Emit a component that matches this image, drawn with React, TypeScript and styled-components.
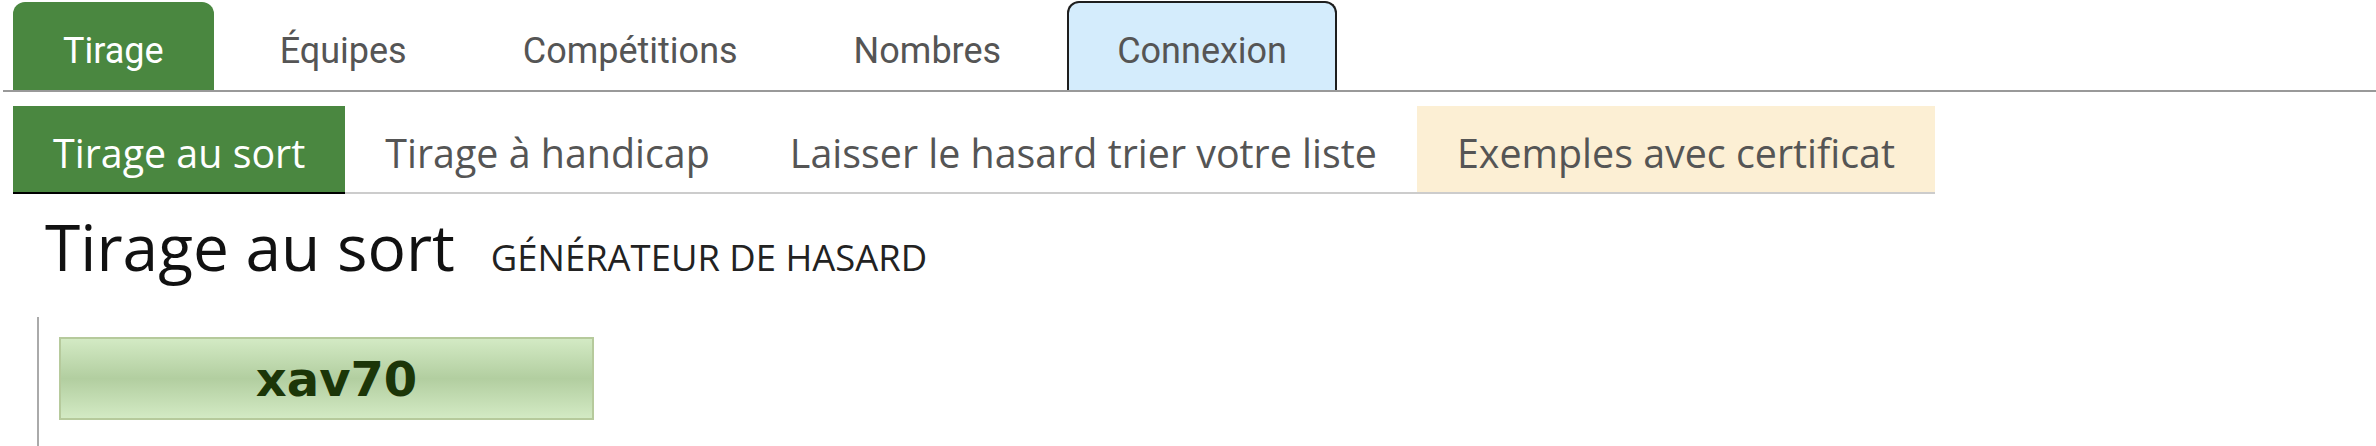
import React from "react";
import styled, { createGlobalStyle, css } from "styled-components";

const Global = createGlobalStyle`
  html, body { margin: 0; padding: 0; background: #fff; }
  body { font-family: "Open Sans", "DejaVu Sans", sans-serif; }
  * { box-sizing: border-box; }
`;

const GREEN = "#4a8740";

const TopNav = styled.nav`
  display: flex;
  align-items: flex-end;
  gap: 16px;
  margin: 0 0 0 3px;
  padding: 0 0 0 10px;
  height: 92px;
  border-bottom: 2px solid #999;
`;

type TabKind = "active" | "plain" | "login";

const Tab = styled.a<{ $kind: TabKind }>`
  display: block;
  font-family: Roboto, "Liberation Sans", sans-serif;
  font-size: 36px;
  line-height: 42px;
  padding: 28px 50px 18px;
  color: #555;
  text-decoration: none;
  border-radius: 12px 12px 0 0;
  white-space: nowrap;
  ${(p) =>
    p.$kind === "active" &&
    css`
      background: ${GREEN};
      color: #fff;
    `}
  ${(p) =>
    p.$kind === "login" &&
    css`
      background: #d4ecfc;
      border: 2px solid #1e1e1e;
      border-bottom: none;
      padding: 27px 48px 18px;
    `}
`;

const SubNav = styled.nav`
  display: inline-flex;
  margin: 14px 0 0 13px;
`;

type SubKind = "active" | "plain" | "example";

const SubItem = styled.a<{ $kind: SubKind }>`
  display: block;
  font-family: "Open Sans", "DejaVu Sans", sans-serif;
  font-size: 39.4px;
  line-height: 54px;
  padding: 20px 40px 12px;
  color: #555;
  white-space: nowrap;
  text-decoration: none;
  border-bottom: 2px solid #ccc;
  ${(p) =>
    p.$kind === "active" &&
    css`
      background: ${GREEN};
      color: #fff;
      border-bottom-color: #000;
    `}
  ${(p) =>
    p.$kind === "example" &&
    css`
      background: #fcefd4;
    `}
`;

const Heading = styled.h1`
  margin: 15px 0 32px;
  padding-left: 45px;
  font-family: "Open Sans", "DejaVu Sans", sans-serif;
  font-weight: 400;
  font-size: 64px;
  line-height: 76px;
  color: #111;
  white-space: nowrap;
`;

const Subtitle = styled.small`
  margin-left: 36px;
  font-size: 36.4px;
  line-height: 0;
  font-weight: 400;
  text-transform: uppercase;
  color: #222;
`;

const Quote = styled.div`
  margin-left: 37px;
  padding: 20px 0 40px 20px;
  border-left: 2px solid #aaa;
`;

const ResultBox = styled.div`
  width: 535px;
  height: 83px;
  display: flex;
  align-items: center;
  justify-content: center;
  padding-left: 20px;
  border: 2px solid #b6ca9c;
  background: linear-gradient(to bottom, #d3eac4 0%, #b2cea0 50%, #d3eac4 100%);
  font-family: "DejaVu Sans", "Verdana", sans-serif;
  font-weight: 700;
  font-size: 48px;
  color: #1c3608;
`;

const topTabs: { label: string; kind: TabKind }[] = [
  { label: "Tirage", kind: "active" },
  { label: "Équipes", kind: "plain" },
  { label: "Compétitions", kind: "plain" },
  { label: "Nombres", kind: "plain" },
  { label: "Connexion", kind: "login" },
];

const subTabs: { label: string; kind: SubKind }[] = [
  { label: "Tirage au sort", kind: "active" },
  { label: "Tirage à handicap", kind: "plain" },
  { label: "Laisser le hasard trier votre liste", kind: "plain" },
  { label: "Exemples avec certificat", kind: "example" },
];

export default function App() {
  return (
    <>
      <Global />
      <TopNav>
        {topTabs.map((t) => (
          <Tab key={t.label} $kind={t.kind}>
            {t.label}
          </Tab>
        ))}
      </TopNav>
      <SubNav>
        {subTabs.map((t) => (
          <SubItem key={t.label} $kind={t.kind}>
            {t.label}
          </SubItem>
        ))}
      </SubNav>
      <Heading>
        Tirage au sort<Subtitle>Générateur de hasard</Subtitle>
      </Heading>
      <Quote>
        <ResultBox>xav70</ResultBox>
      </Quote>
    </>
  );
}
